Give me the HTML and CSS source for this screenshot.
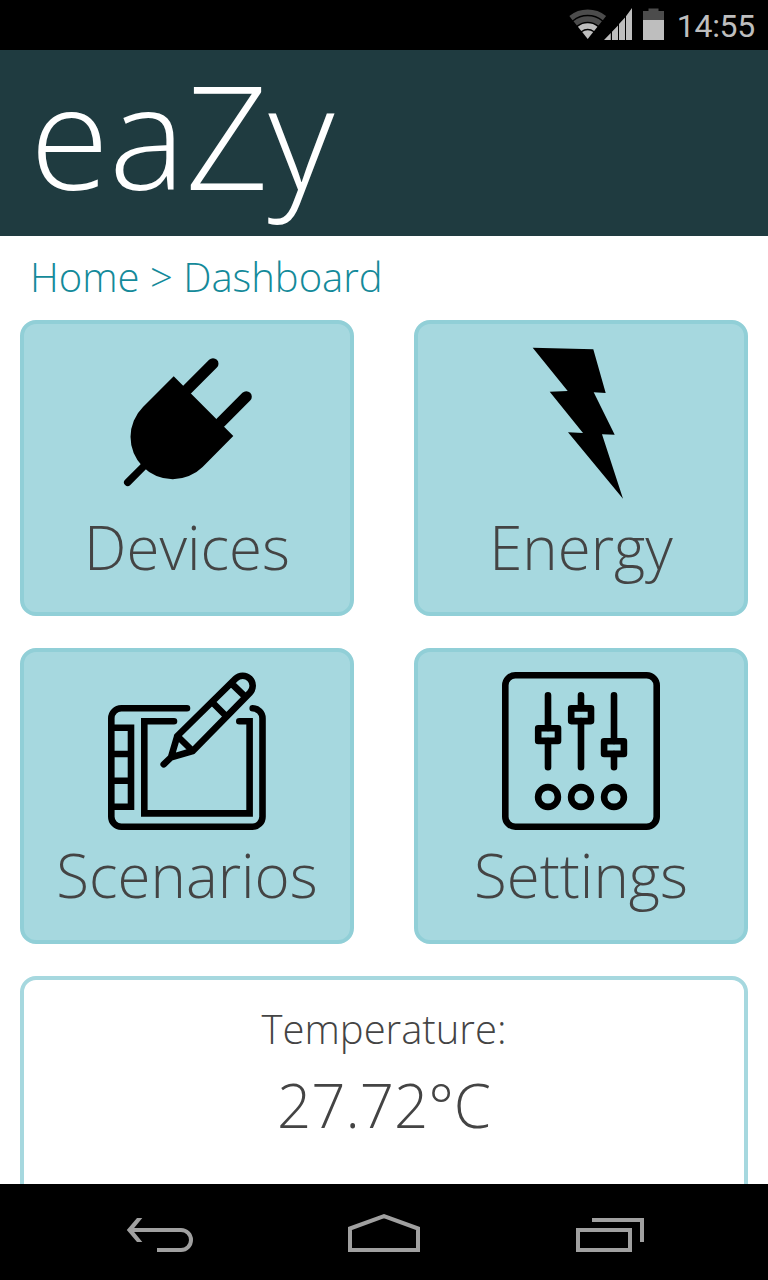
FILE: index.html
```html
<!DOCTYPE html>
<html lang="en">
<head>
<meta charset="utf-8">
<title>eaZy</title>
<link rel="stylesheet" href="styles.css">
</head>
<body>
<div class="status-bar">
  <svg class="status-icons" width="100" height="36" viewBox="0 0 100 36">
    <g fill="none">
      <path d="M2.95 10.1A26.8 26.8 0 0 1 36.45 10.1" stroke="#4c4c4c" stroke-width="5.2"/>
      <path d="M7.2 15.4A20 20 0 0 1 32.2 15.4" stroke="#4c4c4c" stroke-width="5.4"/>
      <path d="M11.6 20.9A13 13 0 0 1 27.8 20.9" stroke="#bebebe" stroke-width="5.4"/>
    </g>
    <path d="M19.7 31L14.2 24.1A8.8 8.8 0 0 1 25.2 24.1Z" fill="#bebebe"/>
    <path d="M36 32L42.8 25V32ZM44 23.8L50 17.5V32H44ZM51 16L57 9.5V32H51ZM58 8.3L64 0V32H58Z" fill="#bebebe"/>
    <path d="M75 3H80.5V0.5H90.5V3H96V12H75Z" fill="#4c4c4c"/>
    <path d="M75 12H96V32H75Z" fill="#bebebe"/>
  </svg>
  <span class="clock">14:55</span>
</div>
<header class="app-header"><h1 class="brand">eaZy</h1></header>
<main class="content">
  <nav class="breadcrumb"><a>Home</a> &gt; <a>Dashboard</a></nav>
  <div class="tiles">
    <a class="tile">
      <svg class="tile-icon" viewBox="0 0 158 158">
        <path d="M65.7 32.3L125.3 92L94.6 123A42.2 42.2 0 1 1 35 63Z"/>
        <g fill="none" stroke="#000" stroke-linecap="round">
          <path d="M79.3 45.3L105 19.7M112.7 78.3L138.3 52.7" stroke-width="11"/>
          <path d="M19.7 138.3L38 120" stroke-width="7.4"/>
        </g>
      </svg>
      <span class="tile-label">Devices</span>
    </a>
    <a class="tile">
      <svg class="tile-icon" viewBox="0 0 158 158">
        <path d="M30.7 3.8L91.3 5.3L103.7 49L91.7 48.3L112.7 90.7L100 90.3L121 154.7L66 88.3L81 89L47.7 47.7L65.7 47Z"/>
      </svg>
      <span class="tile-label">Energy</span>
    </a>
    <a class="tile">
      <svg class="tile-icon line-icon" viewBox="0 0 158 158">
        <path d="M79 36.3H13.3A10 10 0 0 0 3.3 46.3V144.7A10 10 0 0 0 13.3 154.7H144.5A10 10 0 0 0 154.5 144.7V46.3A10 10 0 0 0 144.7 36.3"/>
        <path d="M3.3 55.8H23V134.8H3.3M3.3 82H23M3.3 108.7H23"/>
        <path d="M66 49.3H36.3V141.4H141.6V49.3H131.3"/>
        <path d="M69.3 64L127.6 6.7A10 10 0 0 1 141.8 20.8L84.7 79L63 85.3ZM69.3 64L84.7 79M104.5 30.5L117.5 43.5M123.5 11.5L137 24.5M63 85.3L55.7 92.3"/>
      </svg>
      <span class="tile-label">Scenarios</span>
    </a>
    <a class="tile">
      <svg class="tile-icon line-icon" viewBox="0 0 158 158">
        <rect x="3.3" y="3.3" width="151.4" height="151.4" rx="10"/>
        <path d="M46 23.3V56M46 69V95.3M79 23.3V36M79 49V95.3M112 23.3V69M112 82V95.3"/>
        <g stroke-linejoin="round">
          <rect x="36.2" y="56.2" width="19.8" height="12.7"/>
          <rect x="69.2" y="36.4" width="19.8" height="12.7"/>
          <rect x="102.1" y="69.2" width="19.8" height="12.7"/>
        </g>
        <circle cx="46" cy="125" r="9.9"/>
        <circle cx="79" cy="125" r="9.9"/>
        <circle cx="112" cy="125" r="9.9"/>
      </svg>
      <span class="tile-label">Settings</span>
    </a>
  </div>
  <section class="reading">
    <div class="reading-name">Temperature:</div>
    <div class="reading-value">27.72°C</div>
  </section>
</main>
<footer class="nav-bar">
  <svg width="768" height="96" viewBox="0 0 768 96" fill="none" stroke="#a0a0a0" stroke-width="4">
    <path d="M130 46H181A10 10 0 0 1 181 66H157"/>
    <path d="M137 34H142.3L132.5 46L142.3 58H137L126.8 46Z" fill="#a0a0a0" stroke="none"/>
    <path d="M350 66V44.5L384 32.2L418 44.5V66Z"/>
    <path d="M578 46H630V66H578ZM592 36H642V58"/>
  </svg>
</footer>
</body>
</html>
```
FILE: styles.css
```css
* { box-sizing: border-box; }
html, body { height: 100%; }
body {
  margin: 0;
  display: flex;
  flex-direction: column;
  overflow: hidden;
  background: #fff;
  color: #444;
  font-family: "Open Sans", sans-serif;
  font-weight: 300;
}
svg { display: block; }
.status-bar {
  flex: none;
  height: 50px;
  padding: 0 13px 0 0;
  display: flex;
  justify-content: flex-end;
  align-items: center;
  gap: 9px;
  background: #000;
}
.status-icons { margin-top: 2px; }
.clock {
  padding-top: 2px;
  font: 400 32px/50px Roboto, sans-serif;
  letter-spacing: -0.3px;
  color: #bebebe;
}
.app-header {
  flex: none;
  height: 186px;
  padding: 0 30px;
  background: #1f3b40;
}
.brand {
  margin: 0;
  font-size: 144px;
  line-height: 168px;
  font-weight: 300;
  color: #fff;
}
.content {
  flex: 1;
  min-height: 0;
  overflow: hidden;
  padding: 0 20px;
}
.breadcrumb {
  height: 84px;
  padding: 0 10px;
  font-size: 40px;
  line-height: 81px;
  color: #148a9a;
}
.tiles {
  display: grid;
  grid-template-columns: 1fr 1fr;
  gap: 32px 60px;
}
.tile {
  height: 296px;
  padding-top: 20px;
  display: flex;
  flex-direction: column;
  align-items: center;
  background: #a6d8df;
  border: 4px solid #91cfd7;
  border-radius: 16px;
}
.tile-icon { flex: none; width: 158px; height: 158px; }
.line-icon {
  fill: none;
  stroke: #000;
  stroke-width: 6.6;
  stroke-linecap: round;
}
.tile-label, .reading-value {
  font-size: 60px;
  line-height: 91px;
}
.reading {
  height: 300px;
  margin-top: 32px;
  padding-top: 18px;
  border: 4px solid #a6d8df;
  border-radius: 16px;
  text-align: center;
}
.reading-name { font-size: 40px; line-height: 61px; }
.reading-value { line-height: 92px; }
.nav-bar {
  flex: none;
  height: 96px;
  background: #000;
}
```
